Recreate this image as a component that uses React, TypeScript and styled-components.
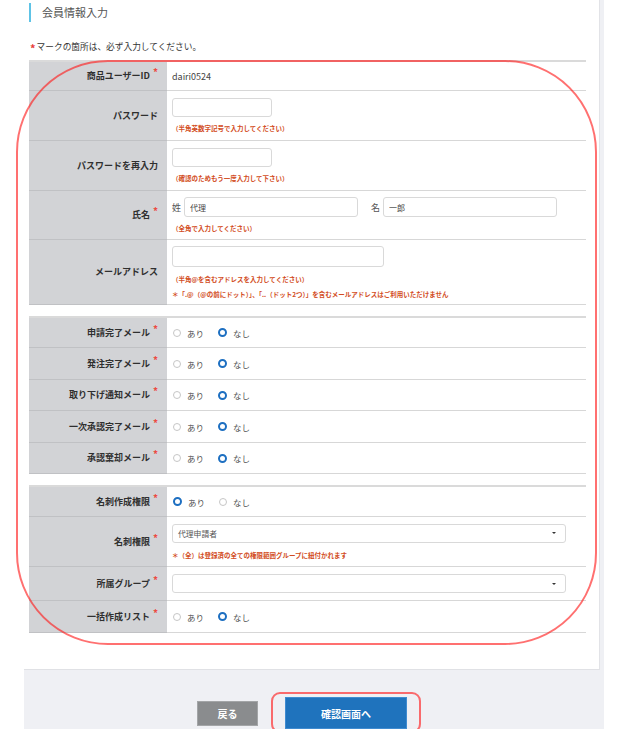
import React from 'react';
import styled, { createGlobalStyle } from 'styled-components';

const GlobalStyle = createGlobalStyle`
  html, body {
    margin: 0;
    padding: 0;
    background: #ffffff;
  }
  body {
    font-family: "Noto Sans CJK JP", "Noto Sans", "Liberation Sans", sans-serif;
    color: #333;
  }
  * {
    box-sizing: border-box;
  }
`;

const Shell = styled.main`
  margin-left: 24px;
  width: 580px;
  background: #eff0f4;
`;

const Card = styled.section`
  position: relative;
  width: 576px;
  padding: 3px 13px 36px 5px;
  background: #fff;
  border-right: 1px solid #e2e3e7;
  border-bottom: 1px solid #e0e1e5;
`;

const Heading = styled.h2`
  margin: 0;
  height: 19px;
  padding-left: 11px;
  border-left: 2px solid #5ec3e6;
  font-size: 11px;
  font-weight: 400;
  line-height: 19px;
  color: #555;
`;

const Note = styled.p`
  margin: 20px 0 8px 1px;
  font-size: 8.7px;
  line-height: 10px;
  color: #333;
`;

const NoteMark = styled.span`
  color: #e8403a;
  font-size: 11px;
  font-weight: 700;
  line-height: 0;
  margin-right: 1px;
  vertical-align: -3px;
`;

const Table = styled.div`
  border-top: 2px solid #dadada;
  & + & {
    margin-top: 11px;
  }
`;

const Row = styled.div<{ $h: number }>`
  display: grid;
  grid-template-columns: 138px 1fr;
  min-height: ${(p) => p.$h}px;
`;

const Label = styled.div`
  display: flex;
  align-items: center;
  justify-content: flex-end;
  padding-right: 9px;
  background: #d2d3d6;
  border-bottom: 1px solid #c0c1c4;
  font-size: 9px;
  font-weight: 700;
  line-height: 12px;
  color: #2f2f2f;
`;

const Req = styled.span`
  margin-left: 3px;
  color: #ec4b43;
  font-size: 10px;
  line-height: 0;
  vertical-align: 3px;
`;

const Value = styled.div`
  display: flex;
  flex-direction: column;
  justify-content: center;
  align-items: flex-start;
  padding: 0 5px;
  border-bottom: 1px solid #d7d7d7;
  font-size: 9px;
  color: #444;
`;

const TextBox = styled.input<{ $w: number; $h?: number }>`
  width: ${(p) => p.$w}px;
  height: ${(p) => p.$h ?? 19}px;
  padding: 0 5px;
  border: 1px solid #d9d9d9;
  border-radius: 3px;
  background: #fff;
  font-family: inherit;
  font-size: 8px;
  color: #444;
  outline: none;
`;

const Hint = styled.div<{ $gap?: number }>`
  margin-top: ${(p) => p.$gap ?? 6}px;
  font-size: 6.5px;
  line-height: 10px;
  font-weight: 700;
  color: #d24c22;
  white-space: nowrap;
`;

const NameLine = styled.div`
  display: flex;
  align-items: center;
  gap: 13px;
`;

const NamePart = styled.label`
  display: flex;
  align-items: center;
  gap: 3px;
  font-size: 9px;
  color: #555;
`;

const Choices = styled.div`
  display: flex;
  align-items: center;
  gap: 14px;
  padding-left: 1px;
`;

const Choice = styled.label`
  display: flex;
  align-items: center;
  gap: 6px;
  font-size: 8.5px;
  color: #555;
`;

const Dot = styled.span<{ $on: boolean }>`
  width: ${(p) => (p.$on ? 9 : 8)}px;
  height: ${(p) => (p.$on ? 9 : 8)}px;
  border-radius: 50%;
  border: ${(p) => (p.$on ? '2.5px solid #1d6fc1' : '1px solid #c6c6c6')};
  background: #fff;
`;

const Select = styled.div`
  display: flex;
  align-items: center;
  justify-content: space-between;
  width: 394px;
  height: 19px;
  padding: 0 9px 0 5px;
  border: 1px solid #d9d9d9;
  border-radius: 3px;
  font-size: 7.8px;
  color: #555;
`;

const Caret = styled.span`
  width: 0;
  height: 0;
  border-left: 2px solid transparent;
  border-right: 2px solid transparent;
  border-top: 2px solid #333;
`;

const Highlight = styled.div`
  position: absolute;
  left: -8px;
  top: 60px;
  width: 581px;
  height: 585px;
  border: 2px solid rgba(255, 24, 24, 0.62);
  border-radius: 92px;
  pointer-events: none;
`;

const Footer = styled.div`
  display: flex;
  align-items: center;
  gap: 27px;
  height: 59px;
  padding: 27px 0 0 173px;
`;

const Button = styled.button<{ $primary?: boolean }>`
  width: ${(p) => (p.$primary ? 122 : 61)}px;
  height: ${(p) => (p.$primary ? 32 : 25)}px;
  padding: 0;
  border: 1px solid ${(p) => (p.$primary ? '#3f8bd0' : '#a3a5a7')};
  background: ${(p) => (p.$primary ? '#1f73bd' : '#8a8c8e')};
  color: #fff;
  font-family: inherit;
  font-size: 10px;
  font-weight: 700;
`;

const FocusWrap = styled.div`
  position: relative;
  display: flex;
`;

const FocusMark = styled.div`
  position: absolute;
  inset: -5px -14px -4px -14px;
  border: 2px solid rgba(255, 24, 24, 0.62);
  border-radius: 9px;
  pointer-events: none;
`;

function Radios({ yes }: { yes: boolean }) {
  return (
    <Choices>
      <Choice>
        <Dot $on={yes} />
        あり
      </Choice>
      <Choice>
        <Dot $on={!yes} />
        なし
      </Choice>
    </Choices>
  );
}

function Field({ label, req, h, children }: { label: string; req?: boolean; h: number; children: React.ReactNode }) {
  return (
    <Row $h={h}>
      <Label>
        <span>
          {label}
          {req && <Req>*</Req>}
        </span>
      </Label>
      <Value>{children}</Value>
    </Row>
  );
}

const mails = [
  { label: '申請完了メール', h: 30 },
  { label: '発注完了メール', h: 32 },
  { label: '取り下げ通知メール', h: 31 },
  { label: '一次承認完了メール', h: 32 },
  { label: '承認棄却メール', h: 31 },
];

export default function App() {
  return (
    <>
      <GlobalStyle />
      <Shell>
        <Card>
          <Heading>会員情報入力</Heading>
          <Note>
            <NoteMark>*</NoteMark>マークの箇所は、必ず入力してください。
          </Note>

          <Table>
            <Field label="商品ユーザーID" req h={29}>
              dairi0524
            </Field>
            <Field label="パスワード" h={50}>
              <TextBox type="password" $w={100} />
              <Hint>（半角英数字記号で入力してください）</Hint>
            </Field>
            <Field label="パスワードを再入力" h={50}>
              <TextBox type="password" $w={100} />
              <Hint>（確認のためもう一度入力して下さい）</Hint>
            </Field>
            <Field label="氏名" req h={49}>
              <NameLine>
                <NamePart>
                  姓<TextBox $w={174} $h={20} defaultValue="代理" />
                </NamePart>
                <NamePart>
                  名<TextBox $w={174} $h={20} defaultValue="一郎" />
                </NamePart>
              </NameLine>
              <Hint>（全角で入力してください）</Hint>
            </Field>
            <Field label="メールアドレス" h={65}>
              <TextBox $w={212} $h={21} />
              <Hint $gap={7}>（半角@を含むアドレスを入力してください）</Hint>
              <Hint $gap={5}>＊「.@（@の前にドット）」、「..（ドット2つ）」を含むメールアドレスはご利用いただけません</Hint>
            </Field>
          </Table>

          <Table>
            {mails.map((m) => (
              <Field key={m.label} label={m.label} req h={m.h}>
                <Radios yes={false} />
              </Field>
            ))}
          </Table>

          <Table>
            <Field label="名刺作成権限" req h={30}>
              <Radios yes />
            </Field>
            <Field label="名刺権限" req h={50}>
              <Select>
                代理申請者
                <Caret />
              </Select>
              <Hint $gap={7}>＊（全）は登録済の全ての権限範囲グループに紐付かれます</Hint>
            </Field>
            <Field label="所属グループ" req h={34}>
              <Select>
                <span />
                <Caret />
              </Select>
            </Field>
            <Field label="一括作成リスト" req h={32}>
              <Radios yes={false} />
            </Field>
          </Table>

          <Highlight />
        </Card>

        <Footer>
          <Button>戻る</Button>
          <FocusWrap>
            <Button $primary>確認画面へ</Button>
            <FocusMark />
          </FocusWrap>
        </Footer>
      </Shell>
    </>
  );
}
